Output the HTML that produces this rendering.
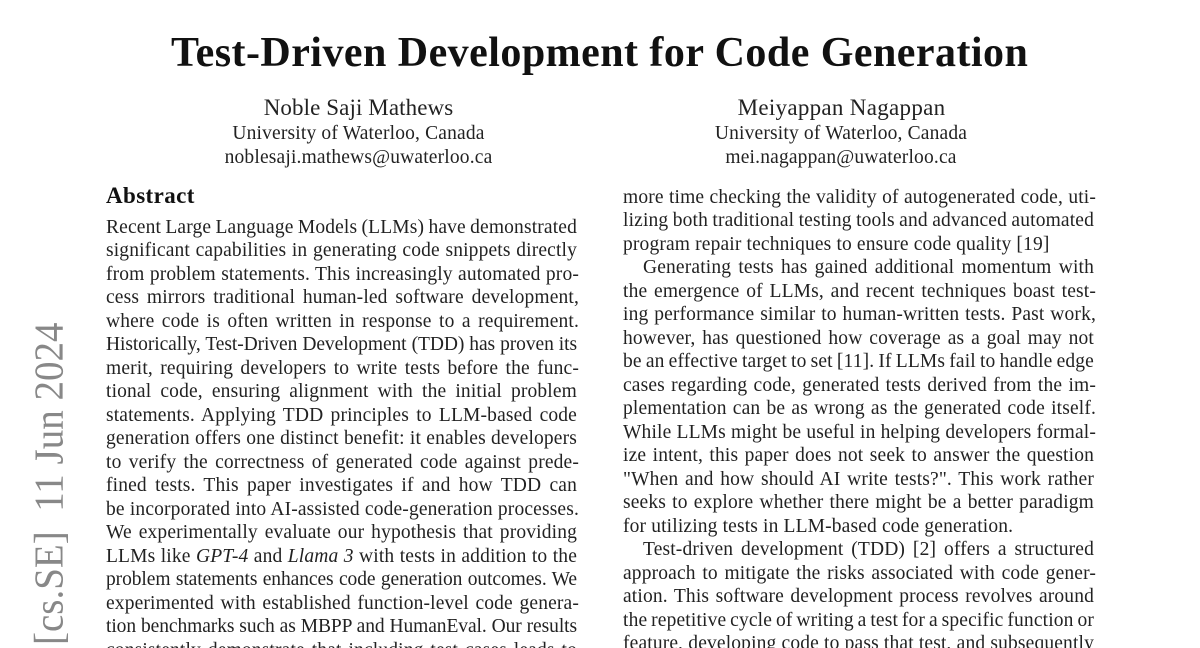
<!DOCTYPE html>
<html><head><meta charset="utf-8">
<style>
html,body{margin:0;padding:0;background:#fff;width:1200px;height:648px;overflow:hidden}
body{position:relative;font-family:"Liberation Serif",serif;color:#1a1a1a}
.a{position:absolute;white-space:nowrap}
.c{transform:translateX(-50%)}
.n{font-size:23px;line-height:26px;color:#222;letter-spacing:.1px;top:95px}
.u{font-size:19.5px;line-height:23px;color:#222;letter-spacing:.17px}
.col{position:absolute;width:471px;font-size:19.5px;line-height:23.5px;color:#222;letter-spacing:.15px;word-spacing:-3px}
.col div{white-space:nowrap;text-align:justify;text-align-last:justify;height:23.5px}
.col div.h{width:473px}
.col div.l{text-align-last:left;word-spacing:0}
.col div.i{padding-left:20px;width:451px}
.col div.t{letter-spacing:-.08px}
</style></head><body>
<div class="a" style="left:171px;top:30px;width:857px;text-align:center;font-size:42px;line-height:46px;font-weight:bold;color:#111;letter-spacing:.46px">Test-Driven Development for Code Generation</div>

<div class="a c n" style="left:358.5px">Noble Saji Mathews</div>
<div class="a c u" style="left:358.5px;top:122px">University of Waterloo, Canada</div>
<div class="a c u" style="left:358.5px;top:145.5px">noblesaji.mathews@uwaterloo.ca</div>
<div class="a c n" style="left:841.5px;letter-spacing:.3px">Meiyappan Nagappan</div>
<div class="a c u" style="left:841px;top:122px">University of Waterloo, Canada</div>
<div class="a c u" style="left:841px;top:145.5px">mei.nagappan@uwaterloo.ca</div>

<div class="a" style="left:106px;top:184px;font-size:23px;line-height:24px;font-weight:bold;color:#111;letter-spacing:.4px">Abstract</div>

<div class="col" style="left:106px;top:215.5px">
<div>Recent Large Language Models (LLMs) have demonstrated</div>
<div>significant capabilities in generating code snippets directly</div>
<div class="h">from problem statements. This increasingly automated pro-</div>
<div class="h">cess mirrors traditional human-led software development,</div>
<div class="h">where code is often written in response to a requirement.</div>
<div class="t">Historically, Test-Driven Development (TDD) has proven its</div>
<div class="h">merit, requiring developers to write tests before the func-</div>
<div>tional code, ensuring alignment with the initial problem</div>
<div>statements. Applying TDD principles to LLM-based code</div>
<div>generation offers one distinct benefit: it enables developers</div>
<div class="h">to verify the correctness of generated code against prede-</div>
<div>fined tests. This paper investigates if and how TDD can</div>
<div class="h">be incorporated into AI-assisted code-generation processes.</div>
<div>We experimentally evaluate our hypothesis that providing</div>
<div>LLMs like <i>GPT-4</i> and <i>Llama 3</i> with tests in addition to the</div>
<div class="t">problem statements enhances code generation outcomes. We</div>
<div class="h">experimented with established function-level code genera-</div>
<div class="t">tion benchmarks such as MBPP and HumanEval. Our results</div>
<div>consistently demonstrate that including test cases leads to</div>
</div>

<div class="col" style="left:623px;top:185.5px">
<div class="h">more time checking the validity of autogenerated code, uti-</div>
<div>lizing both traditional testing tools and advanced automated</div>
<div class="l">program repair techniques to ensure code quality [19]</div>
<div class="i">Generating tests has gained additional momentum with</div>
<div class="h">the emergence of LLMs, and recent techniques boast test-</div>
<div class="h">ing performance similar to human-written tests. Past work,</div>
<div>however, has questioned how coverage as a goal may not</div>
<div>be an effective target to set [11]. If LLMs fail to handle edge</div>
<div class="h">cases regarding code, generated tests derived from the im-</div>
<div class="h">plementation can be as wrong as the generated code itself.</div>
<div class="h">While LLMs might be useful in helping developers formal-</div>
<div>ize intent, this paper does not seek to answer the question</div>
<div>"When and how should AI write tests?". This work rather</div>
<div>seeks to explore whether there might be a better paradigm</div>
<div class="l">for utilizing tests in LLM-based code generation.</div>
<div class="i">Test-driven development (TDD) [2] offers a structured</div>
<div class="h">approach to mitigate the risks associated with code gener-</div>
<div>ation. This software development process revolves around</div>
<div>the repetitive cycle of writing a test for a specific function or</div>
<div>feature, developing code to pass that test, and subsequently</div>
</div>

<div class="a" style="left:63px;top:645px;font-size:39px;line-height:39px;color:#888;white-space:pre;transform-origin:0 0;transform:rotate(-90deg) scale(1,1.07) translateY(-32.7px)">[cs.SE]  11 Jun 2024</div>
</body></html>
